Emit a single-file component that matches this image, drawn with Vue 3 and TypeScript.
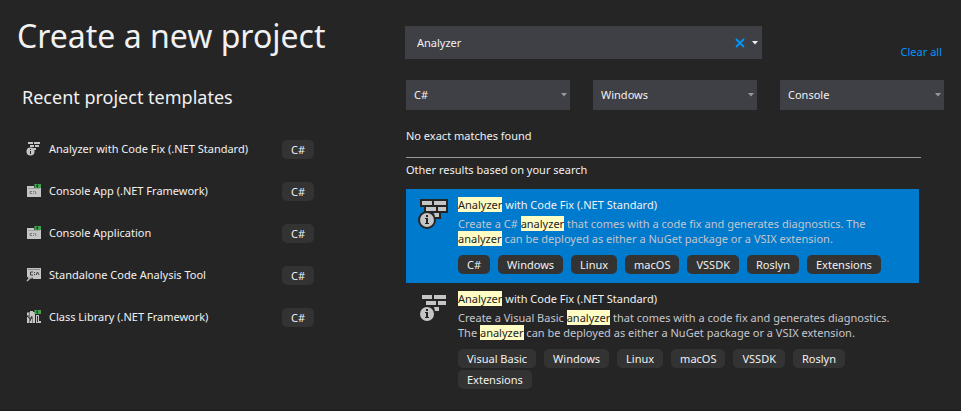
<script setup lang="ts">
import { ref } from 'vue'

type IconName = 'analyzer' | 'console' | 'tool' | 'library'
interface Recent { name: string; icon: IconName; language: string }
interface Part { text: string; hit?: boolean }
interface Result { id: number; description: Part[]; tags: string[] }

const query = ref('Analyzer')
const selected = ref(1)

const recents: Recent[] = [
  { name: 'Analyzer with Code Fix (.NET Standard)', icon: 'analyzer', language: 'C#' },
  { name: 'Console App (.NET Framework)', icon: 'console', language: 'C#' },
  { name: 'Console Application', icon: 'console', language: 'C#' },
  { name: 'Standalone Code Analysis Tool', icon: 'tool', language: 'C#' },
  { name: 'Class Library (.NET Framework)', icon: 'library', language: 'C#' },
]

const filters = ref([
  { label: 'Language', value: 'C#', options: ['C#', 'Visual Basic'] },
  { label: 'Platform', value: 'Windows', options: ['Windows', 'Linux', 'macOS'] },
  { label: 'Project type', value: 'Console', options: ['Console', 'Extensions'] },
])

const results: Result[] = [
  {
    id: 1,
    description: [
      { text: 'Create a C# ' },
      { text: 'analyzer', hit: true },
      { text: ' that comes with a code fix and generates diagnostics. The ' },
      { text: 'analyzer', hit: true },
      { text: ' can be deployed as either a NuGet package or a VSIX extension.' },
    ],
    tags: ['C#', 'Windows', 'Linux', 'macOS', 'VSSDK', 'Roslyn', 'Extensions'],
  },
  {
    id: 2,
    description: [
      { text: 'Create a Visual Basic ' },
      { text: 'analyzer', hit: true },
      { text: ' that comes with a code fix and generates diagnostics. The ' },
      { text: 'analyzer', hit: true },
      { text: ' can be deployed as either a NuGet package or a VSIX extension.' },
    ],
    tags: ['Visual Basic', 'Windows', 'Linux', 'macOS', 'VSSDK', 'Roslyn', 'Extensions'],
  },
]

function clearAll() {
  query.value = ''
}
</script>

<template>
  <main class="page">
    <section class="recent">
      <h1>Create a new project</h1>
      <h2>Recent project templates</h2>
      <ul class="recent-list">
        <li v-for="item in recents" :key="item.name">
          <svg v-if="item.icon === 'analyzer'" class="small-icon" viewBox="0 0 16 16" aria-hidden="true">
            <path fill="#c5c5c5" d="M3 1h5v2H3zM9 1h6v2H9zM5 4h4v2H5zM10 4h4v2h-4zM8 7h3v2H9z" />
            <circle cx="5.500" cy="10.500" r="4" fill="#c5c5c5" />
            <path fill="#252526" d="M5 8h1v1H5zM5 10h1v3H5z" />
          </svg>
          <svg v-else-if="item.icon === 'console'" class="small-icon" viewBox="0 0 16 16" aria-hidden="true">
            <path fill="#c5c5c5" d="M2 3h7v2h7v9H2z" />
            <path fill="#a4a4a4" d="M3 5h12v1H3z" />
            <path fill="none" stroke="#777" d="M7 8.500H5v2h2M8.500 8v1M8.500 10v1M10 8l1 3" />
            <path fill="none" stroke="#3fa34d" stroke-width="1.500" d="M12.500 1.700h-2.300v2.500h2.300M13 2.200h3M13 4h3M13.800 1v4M15.300 1v4" />
          </svg>
          <svg v-else-if="item.icon === 'tool'" class="small-icon" viewBox="0 0 16 16" aria-hidden="true">
            <path fill="#c5c5c5" d="M2 1h14v11H8l-1-2H2z" />
            <path fill="#8c8c8c" d="M3 2h12v1H3z" />
            <path fill="none" stroke="#3c3c3c" d="M8 5H5.500v3H8M9.500 5v1M9.500 7v1M11 8l1.500-3 1.500 3" />
            <path fill="none" stroke="#252526" stroke-width="3" d="M2 14l3-3" />
            <path fill="none" stroke="#bcbcbc" stroke-width="1.500" d="M2 14l4-4M3 9l1 2 2 0 1-2" />
          </svg>
          <svg v-else class="small-icon" viewBox="0 0 16 16" aria-hidden="true">
            <path fill="#777" d="M2 3h6v11H2z" />
            <path fill="#c5c5c5" d="M2 4h2v2H2zM5 2h3v6H5zM2 8h2v6H2zM5 10h2v4H5zM8 3h2v11H8zM11 6h3v8h-3zM14 12h2v2h-2z" />
            <path fill="none" stroke="#333" d="M2 7l3 3M7 7l-2 5M12.500 7v6" />
            <path fill="none" stroke="#3fa34d" stroke-width="1.500" d="M12.500 1.700h-2.300v2.500h2.300M13 2.200h3M13 4h3M13.800 1v4M15.300 1v4" />
          </svg>
          <span class="recent-name">{{ item.name }}</span>
          <span class="tag">{{ item.language }}</span>
        </li>
      </ul>
    </section>

    <section class="browse">
      <div class="search-row">
        <form class="search" @submit.prevent>
          <input v-model="query" type="text" aria-label="Search for templates" />
          <button type="button" aria-label="Clear search" @click="query = ''">
            <svg width="10" height="10" viewBox="0 0 10 10"><path d="M1 1l8 8M9 1l-8 8" stroke="#0097fb" stroke-width="1.800" /></svg>
          </button>
          <button type="button" aria-label="Search history">
            <svg width="6" height="4" viewBox="0 0 6 4"><path d="M0 0h6L3 3.500z" fill="#f1f1f1" /></svg>
          </button>
        </form>
        <a class="clear" href="#" @click.prevent="clearAll">Clear all</a>
      </div>

      <div class="filters">
        <label v-for="filter in filters" :key="filter.label" class="filter">
          <select v-model="filter.value" :aria-label="filter.label">
            <option v-for="option in filter.options" :key="option">{{ option }}</option>
          </select>
          <svg width="6" height="4" viewBox="0 0 6 4" aria-hidden="true"><path d="M0 0h6L3 3.500z" fill="#999" /></svg>
        </label>
      </div>

      <div class="results">
        <p class="none">No exact matches found</p>
        <p class="other">Other results based on your search</p>
        <article
          v-for="result in results"
          :key="result.id"
          class="result"
          :class="{ selected: selected === result.id }"
          @click="selected = result.id"
        >
          <svg class="large-icon" viewBox="0 0 32 32" aria-hidden="true">
            <g v-if="selected === result.id" fill="#252526">
              <path d="M3 0h28v14h-7v6h-7v-6H7V8H3z" />
              <circle cx="10" cy="21" r="9" />
            </g>
            <path fill="#c5c5c5" d="M5 2h10v4H5zM17 2h12v4H17zM9 8h10v4H9zM21 8h8v4h-8zM17 14h5v4h-4z" />
            <circle cx="10" cy="21" r="7" fill="#c5c5c5" />
            <path fill="#252526" d="M9 16h2v2H9zM8 19h3v5h1v1H8v-1h1v-4H8z" />
          </svg>
          <div class="result-body">
            <h3><mark>Analyzer</mark> with Code Fix (.NET Standard)</h3>
            <p class="description"><template v-for="(part, i) in result.description" :key="i"><mark v-if="part.hit">{{ part.text }}</mark><template v-else>{{ part.text }}</template></template></p>
            <div class="tags">
              <span v-for="tag in result.tags" :key="tag" class="tag">{{ tag }}</span>
            </div>
          </div>
        </article>
      </div>
    </section>
  </main>
</template>

<style>
body {
  background: #252526;
}
</style>

<style scoped>
.page {
  display: grid;
  grid-template-columns: 405px 1fr;
  box-sizing: border-box;
  min-height: 100vh;
  border-bottom: 1px solid #1b1b1c;
  background: #252526;
  color: #f1f1f1;
  font: 11px/16px "Noto Sans", "Open Sans", sans-serif;
}
h1, h2, h3, p, ul {
  margin: 0;
  padding: 0;
  font-size: inherit;
  font-weight: 400;
}
.recent {
  padding: 12px 0 0 17px;
}
h1 {
  font-size: 32px;
  line-height: 48px;
}
h2 {
  margin: 23px 0 0 5px;
  font-size: 18px;
  line-height: 28px;
}
.recent-list {
  margin-top: 17px;
  list-style: none;
}
.recent-list li {
  display: grid;
  grid-template-columns: 16px 1fr auto;
  column-gap: 8px;
  align-items: center;
  height: 42px;
  padding: 0 91px 0 8px;
}
.small-icon {
  width: 16px;
  height: 16px;
}
.recent-name {
  white-space: nowrap;
}
.tag {
  padding: 0 9px;
  border-radius: 5px;
  background: #333334;
  line-height: 19px;
}
.browse {
  padding: 26px 17px 0 0;
}
.search-row {
  display: flex;
  justify-content: space-between;
  align-items: center;
  height: 33px;
}
.search {
  display: flex;
  flex: 0 1 357px;
  align-items: center;
  box-sizing: border-box;
  height: 33px;
  background: #3f3f46;
}
.search input {
  flex: 1;
  min-width: 0;
  padding: 0 12px;
  border: 0;
  outline: 0;
  background: transparent;
  color: inherit;
  font: inherit;
}
.search button {
  display: flex;
  align-items: center;
  justify-content: center;
  width: 15px;
  height: 24px;
  padding: 0;
  border: 0;
  background: transparent;
}
.clear {
  padding: 18px 2px 0 0;
  color: #0097fb;
  text-decoration: none;
}
.filters {
  display: grid;
  grid-template-columns: repeat(3, 1fr);
  gap: 23px;
  margin: 21px 0 0 1px;
}
.filter {
  display: grid;
  align-items: center;
  height: 30px;
  background: #3f3f46;
}
.filter select,
.filter svg {
  grid-area: 1 / 1;
}
.filter select {
  height: 30px;
  padding: 0 16px 0 8px;
  border: 0;
  border-radius: 0;
  outline: 0;
  appearance: none;
  background: transparent;
  color: inherit;
  font: inherit;
}
.filter svg {
  justify-self: end;
  margin-right: 3px;
  pointer-events: none;
}
.results {
  margin: 18px 23px 0 1px;
}
.none {
  padding-bottom: 13px;
  border-bottom: 1px solid #999;
}
.other {
  padding: 4px 0 11px;
}
.result {
  display: flex;
  gap: 9px;
  margin-right: 2px;
  padding: 8px 20px 9px 11px;
}
.result.selected {
  background: #007acc;
}
.large-icon {
  flex: none;
  width: 32px;
  height: 32px;
  margin-top: 2px;
}
.result-body {
  flex: 1;
  min-width: 0;
}
mark {
  background: #fffcc4;
  color: #1e1e1e;
}
.description {
  margin: 3px 0 9px;
  color: #c5c5ce;
  line-height: 15px;
}
.tags {
  display: flex;
  flex-wrap: wrap;
  gap: 2px 8px;
}
</style>
